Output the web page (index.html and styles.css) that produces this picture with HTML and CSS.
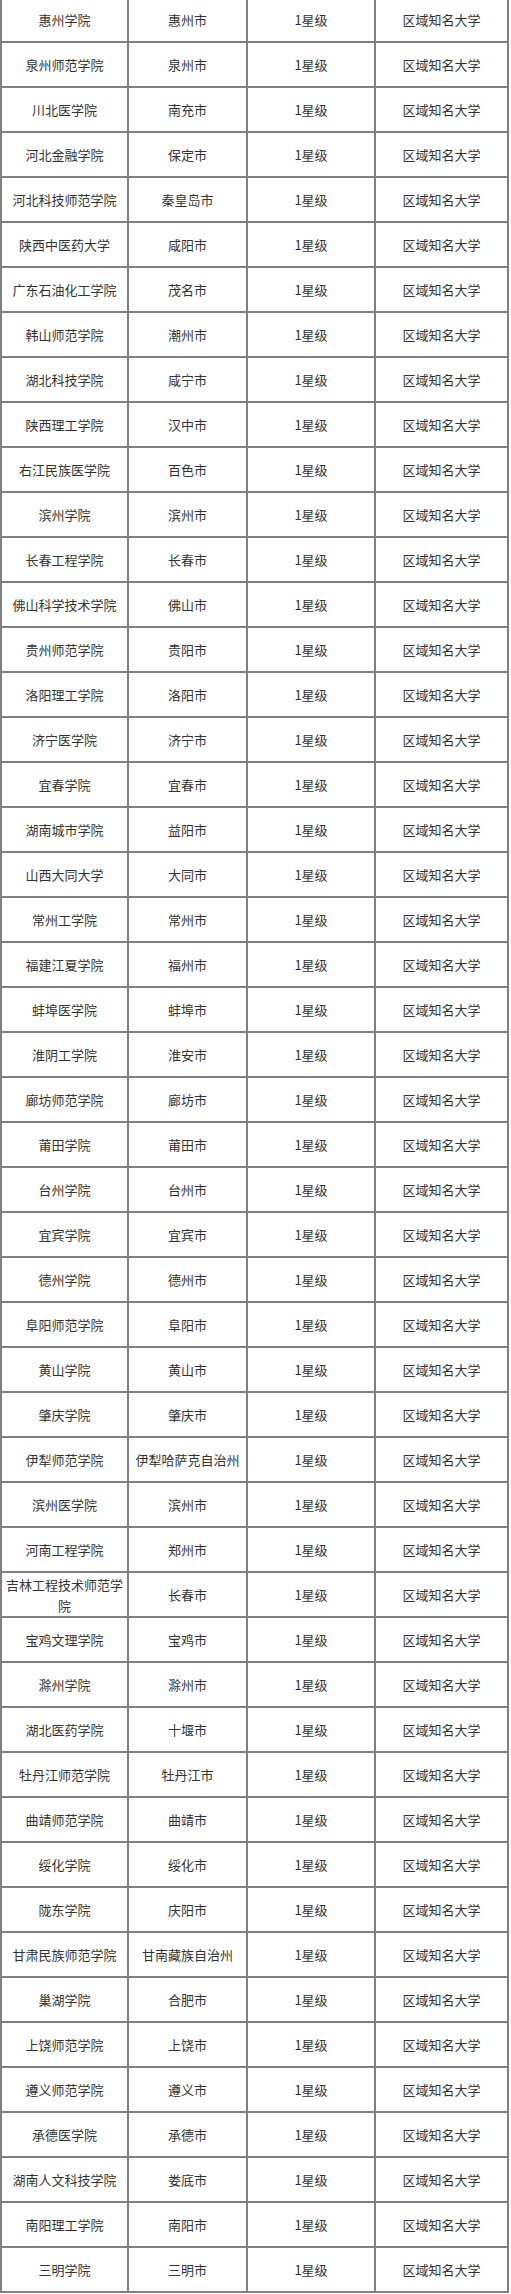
FILE: index.html
```html
<!DOCTYPE html>
<html lang="zh-CN">
<head>
<meta charset="utf-8">
<title>区域知名大学</title>
<link rel="stylesheet" href="styles.css">
</head>
<body>
<table class="uni-table">
<tbody>
<tr><td class="c1">惠州学院</td><td class="c2">惠州市</td><td class="c3">1星级</td><td class="c4">区域知名大学</td></tr>
<tr><td class="c1">泉州师范学院</td><td class="c2">泉州市</td><td class="c3">1星级</td><td class="c4">区域知名大学</td></tr>
<tr><td class="c1">川北医学院</td><td class="c2">南充市</td><td class="c3">1星级</td><td class="c4">区域知名大学</td></tr>
<tr><td class="c1">河北金融学院</td><td class="c2">保定市</td><td class="c3">1星级</td><td class="c4">区域知名大学</td></tr>
<tr><td class="c1">河北科技师范学院</td><td class="c2">秦皇岛市</td><td class="c3">1星级</td><td class="c4">区域知名大学</td></tr>
<tr><td class="c1">陕西中医药大学</td><td class="c2">咸阳市</td><td class="c3">1星级</td><td class="c4">区域知名大学</td></tr>
<tr><td class="c1">广东石油化工学院</td><td class="c2">茂名市</td><td class="c3">1星级</td><td class="c4">区域知名大学</td></tr>
<tr><td class="c1">韩山师范学院</td><td class="c2">潮州市</td><td class="c3">1星级</td><td class="c4">区域知名大学</td></tr>
<tr><td class="c1">湖北科技学院</td><td class="c2">咸宁市</td><td class="c3">1星级</td><td class="c4">区域知名大学</td></tr>
<tr><td class="c1">陕西理工学院</td><td class="c2">汉中市</td><td class="c3">1星级</td><td class="c4">区域知名大学</td></tr>
<tr><td class="c1">右江民族医学院</td><td class="c2">百色市</td><td class="c3">1星级</td><td class="c4">区域知名大学</td></tr>
<tr><td class="c1">滨州学院</td><td class="c2">滨州市</td><td class="c3">1星级</td><td class="c4">区域知名大学</td></tr>
<tr><td class="c1">长春工程学院</td><td class="c2">长春市</td><td class="c3">1星级</td><td class="c4">区域知名大学</td></tr>
<tr><td class="c1">佛山科学技术学院</td><td class="c2">佛山市</td><td class="c3">1星级</td><td class="c4">区域知名大学</td></tr>
<tr><td class="c1">贵州师范学院</td><td class="c2">贵阳市</td><td class="c3">1星级</td><td class="c4">区域知名大学</td></tr>
<tr><td class="c1">洛阳理工学院</td><td class="c2">洛阳市</td><td class="c3">1星级</td><td class="c4">区域知名大学</td></tr>
<tr><td class="c1">济宁医学院</td><td class="c2">济宁市</td><td class="c3">1星级</td><td class="c4">区域知名大学</td></tr>
<tr><td class="c1">宜春学院</td><td class="c2">宜春市</td><td class="c3">1星级</td><td class="c4">区域知名大学</td></tr>
<tr><td class="c1">湖南城市学院</td><td class="c2">益阳市</td><td class="c3">1星级</td><td class="c4">区域知名大学</td></tr>
<tr><td class="c1">山西大同大学</td><td class="c2">大同市</td><td class="c3">1星级</td><td class="c4">区域知名大学</td></tr>
<tr><td class="c1">常州工学院</td><td class="c2">常州市</td><td class="c3">1星级</td><td class="c4">区域知名大学</td></tr>
<tr><td class="c1">福建江夏学院</td><td class="c2">福州市</td><td class="c3">1星级</td><td class="c4">区域知名大学</td></tr>
<tr><td class="c1">蚌埠医学院</td><td class="c2">蚌埠市</td><td class="c3">1星级</td><td class="c4">区域知名大学</td></tr>
<tr><td class="c1">淮阴工学院</td><td class="c2">淮安市</td><td class="c3">1星级</td><td class="c4">区域知名大学</td></tr>
<tr><td class="c1">廊坊师范学院</td><td class="c2">廊坊市</td><td class="c3">1星级</td><td class="c4">区域知名大学</td></tr>
<tr><td class="c1">莆田学院</td><td class="c2">莆田市</td><td class="c3">1星级</td><td class="c4">区域知名大学</td></tr>
<tr><td class="c1">台州学院</td><td class="c2">台州市</td><td class="c3">1星级</td><td class="c4">区域知名大学</td></tr>
<tr><td class="c1">宜宾学院</td><td class="c2">宜宾市</td><td class="c3">1星级</td><td class="c4">区域知名大学</td></tr>
<tr><td class="c1">德州学院</td><td class="c2">德州市</td><td class="c3">1星级</td><td class="c4">区域知名大学</td></tr>
<tr><td class="c1">阜阳师范学院</td><td class="c2">阜阳市</td><td class="c3">1星级</td><td class="c4">区域知名大学</td></tr>
<tr><td class="c1">黄山学院</td><td class="c2">黄山市</td><td class="c3">1星级</td><td class="c4">区域知名大学</td></tr>
<tr><td class="c1">肇庆学院</td><td class="c2">肇庆市</td><td class="c3">1星级</td><td class="c4">区域知名大学</td></tr>
<tr><td class="c1">伊犁师范学院</td><td class="c2">伊犁哈萨克自治州</td><td class="c3">1星级</td><td class="c4">区域知名大学</td></tr>
<tr><td class="c1">滨州医学院</td><td class="c2">滨州市</td><td class="c3">1星级</td><td class="c4">区域知名大学</td></tr>
<tr><td class="c1">河南工程学院</td><td class="c2">郑州市</td><td class="c3">1星级</td><td class="c4">区域知名大学</td></tr>
<tr><td class="c1">吉林工程技术师范学院</td><td class="c2">长春市</td><td class="c3">1星级</td><td class="c4">区域知名大学</td></tr>
<tr><td class="c1">宝鸡文理学院</td><td class="c2">宝鸡市</td><td class="c3">1星级</td><td class="c4">区域知名大学</td></tr>
<tr><td class="c1">滁州学院</td><td class="c2">滁州市</td><td class="c3">1星级</td><td class="c4">区域知名大学</td></tr>
<tr><td class="c1">湖北医药学院</td><td class="c2">十堰市</td><td class="c3">1星级</td><td class="c4">区域知名大学</td></tr>
<tr><td class="c1">牡丹江师范学院</td><td class="c2">牡丹江市</td><td class="c3">1星级</td><td class="c4">区域知名大学</td></tr>
<tr><td class="c1">曲靖师范学院</td><td class="c2">曲靖市</td><td class="c3">1星级</td><td class="c4">区域知名大学</td></tr>
<tr><td class="c1">绥化学院</td><td class="c2">绥化市</td><td class="c3">1星级</td><td class="c4">区域知名大学</td></tr>
<tr><td class="c1">陇东学院</td><td class="c2">庆阳市</td><td class="c3">1星级</td><td class="c4">区域知名大学</td></tr>
<tr><td class="c1">甘肃民族师范学院</td><td class="c2">甘南藏族自治州</td><td class="c3">1星级</td><td class="c4">区域知名大学</td></tr>
<tr><td class="c1">巢湖学院</td><td class="c2">合肥市</td><td class="c3">1星级</td><td class="c4">区域知名大学</td></tr>
<tr><td class="c1">上饶师范学院</td><td class="c2">上饶市</td><td class="c3">1星级</td><td class="c4">区域知名大学</td></tr>
<tr><td class="c1">遵义师范学院</td><td class="c2">遵义市</td><td class="c3">1星级</td><td class="c4">区域知名大学</td></tr>
<tr><td class="c1">承德医学院</td><td class="c2">承德市</td><td class="c3">1星级</td><td class="c4">区域知名大学</td></tr>
<tr><td class="c1">湖南人文科技学院</td><td class="c2">娄底市</td><td class="c3">1星级</td><td class="c4">区域知名大学</td></tr>
<tr><td class="c1">南阳理工学院</td><td class="c2">南阳市</td><td class="c3">1星级</td><td class="c4">区域知名大学</td></tr>
<tr><td class="c1">三明学院</td><td class="c2">三明市</td><td class="c3">1星级</td><td class="c4">区域知名大学</td></tr>
</tbody>
</table>
</body>
</html>
```
FILE: styles.css
```css
html, body {
  margin: 0;
  padding: 0;
  background: #ffffff;
}

body {
  font-family: "Noto Sans CJK SC", "Noto Sans", sans-serif;
  font-size: 13px;
  color: #333333;
}

.uni-table {
  table-layout: fixed;
  width: 509px;
  margin-top: -4px;
  border-collapse: separate;
  border-spacing: 0;
  border-top: 2px solid #808080;
  border-left: 2px solid #808080;
}

.uni-table td {
  box-sizing: border-box;
  height: 45px;
  padding: 0 4px;
  border-right: 2px solid #808080;
  border-bottom: 2px solid #808080;
  text-align: center;
  vertical-align: middle;
  line-height: 21px;
  overflow: hidden;
}

.uni-table .c1 { width: 127px; }
.uni-table .c2 { width: 119px; }
.uni-table .c3 { width: 128px; }
.uni-table .c4 { width: 133px; }
```
